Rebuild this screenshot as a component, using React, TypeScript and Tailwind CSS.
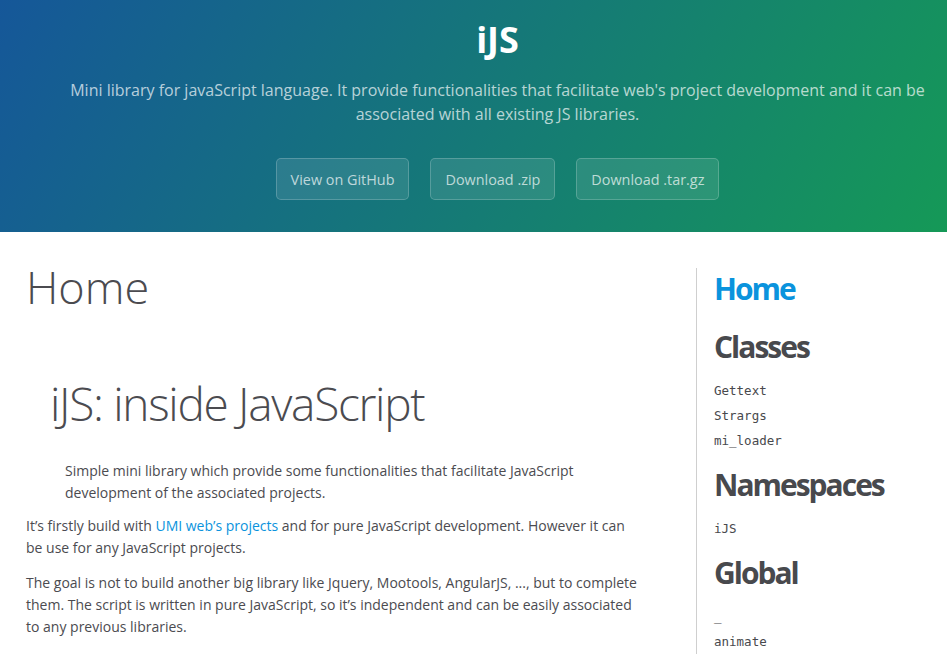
import React from 'react'

const classes = ['Gettext', 'Strargs', 'mi_loader']

const App = () => {
  return (
    <div className="min-h-[654px] bg-white font-['Open_Sans',sans-serif]">
      {/* header */}
      <section className="bg-[linear-gradient(120deg,#155799,#159957)] text-center pl-16 pr-4 pt-[18px] pb-[32px]">
        <h1 className="text-[36px] leading-[1.2] font-bold text-white">iJS</h1>
        <p className="mt-[17px] text-[16px] leading-[24px] text-white/70">
          Mini library for javaScript language. It provide functionalities that facilitate web's project development and it can be associated with all existing JS libraries.
        </p>
        <div className="mt-[32px] flex justify-center gap-[21px]">
          <a href="#" className="px-[14px] py-[9.5px] text-[14.4px] leading-[21px] rounded-[5px] border border-white/20 bg-white/10 text-white/70">View on GitHub</a>
          <a href="#" className="px-[14px] py-[9.5px] text-[14.4px] leading-[21px] rounded-[5px] border border-white/20 bg-white/10 text-white/70">Download .zip</a>
          <a href="#" className="px-[14px] py-[9.5px] text-[14.4px] leading-[21px] rounded-[5px] border border-white/20 bg-white/10 text-white/70">Download .tar.gz</a>
        </div>
      </section>

      {/* main */}
      <div className="flex">
        <div className="w-[696px] shrink-0 pl-[26px] pr-[56px] text-[#4b4b50]">
          <h1 className="mt-[28px] text-[45px] leading-[1.2] font-light">Home</h1>
          <h1 className="mt-[62px] ml-[24px] text-[46px] leading-[1.2] font-light tracking-[-1.3px]">iJS: inside JavaScript</h1>
          <p className="mt-[29px] pl-[39px] text-[14px] leading-[22px]">
            Simple mini library which provide some functionalities that facilitate JavaScript development of the associated projects.
          </p>
          <p className="mt-[11px] text-[14px] leading-[22px]">
            It’s firstly build with <a href="#" className="text-[#0a93dd]">UMI web’s projects</a> and for pure JavaScript development. However it can be use for any JavaScript projects.
          </p>
          <p className="mt-[13px] text-[14px] leading-[22px]">
            The goal is not to build another big library like Jquery, Mootools, AngularJS, ..., but to complete them. The script is written in pure JavaScript, so it’s independent and can be easily associated to any previous libraries.
          </p>
        </div>

        {/* sidebar nav */}
        <nav className="mt-[36px] border-l border-[#cfcfcf] pl-[17px] flex-1 text-[#48494d]">
          <h2 className="mt-[3px] text-[30px] leading-[1.2] font-bold tracking-[-2px] text-[#0a93dd]">Home</h2>
          <h3 className="mt-[22px] text-[30px] leading-[1.2] font-bold tracking-[-2px]">Classes</h3>
          <ul className="mt-[13px] font-['DejaVu_Sans_Mono',monospace] text-[12.5px]">
            {classes.map((c) => (
              <li key={c} className="h-[25px] leading-[25px]">{c}</li>
            ))}
          </ul>
          <h3 className="mt-[14px] text-[30px] leading-[1.2] font-bold tracking-[-2px]">Namespaces</h3>
          <ul className="mt-[13px] font-['DejaVu_Sans_Mono',monospace] text-[12.5px]">
            <li className="h-[25px] leading-[25px]">iJS</li>
          </ul>
          <h3 className="mt-[14px] text-[30px] leading-[1.2] font-bold tracking-[-2px]">Global</h3>
          <ul className="mt-[13px] font-['DejaVu_Sans_Mono',monospace] text-[12.5px]">
            <li className="h-[25px] leading-[25px]">_</li>
            <li className="h-[25px] leading-[25px]">animate</li>
          </ul>
        </nav>
      </div>
    </div>
  )
}

export default App
